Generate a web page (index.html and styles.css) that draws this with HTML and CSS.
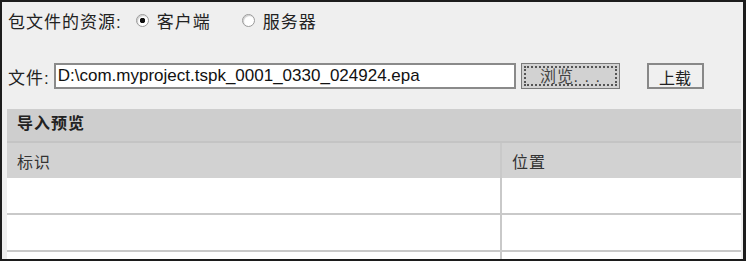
FILE: index.html
```html
<!DOCTYPE html>
<html lang="zh-CN">
<head>
    <meta charset="UTF-8">
    <title>导入</title>
    <link rel="stylesheet" href="styles.css">
</head>
<body>
    <div class="quadro">
        <div class="linha fonte">
            <span class="rotulo">包文件的资源:</span>
            <label class="opcao"><input type="radio" name="fonte" checked><span>客户端</span></label>
            <label class="opcao"><input type="radio" name="fonte"><span>服务器</span></label>
        </div>

        <div class="linha arquivo">
            <span class="rotulo">文件:</span>
            <input type="text" class="caminho" value="D:\com.myproject.tspk_0001_0330_024924.epa">
            <button class="procurar"><span>浏览. . .</span></button>
            <button class="enviar">上载</button>
        </div>

        <div class="previa">
            <div class="titulo">导入预览</div>
            <table>
                <thead><tr><th class="c1">标识</th><th>位置</th></tr></thead>
                <tbody>
                    <tr><td></td><td></td></tr>
                    <tr><td></td><td></td></tr>
                    <tr><td></td><td></td></tr>
                </tbody>
            </table>
        </div>
    </div>
</body>
</html>
```

FILE: styles.css
```css
body { margin: 0; font-family: "Liberation Sans", "Noto Sans CJK SC", sans-serif; color: #222; }
.quadro { box-sizing: border-box; width: 746px; height: 261px; border: 2px solid #1c1c1c; border-right-width: 3px; background-color: #efefef; overflow: hidden; }
.linha { display: flex; align-items: center; padding-left: 6px; font-size: 17px; }
.fonte { height: 37px; }
.arquivo { height: 26px; margin-top: 24px; }
.rotulo { letter-spacing: 1px; }
.opcao { display: flex; align-items: center; margin-left: 14px; letter-spacing: 1px; }
.opcao + .opcao { margin-left: 31px; }
.opcao input { appearance: none; width: 13px; height: 13px; margin: 0 8px 0 0; border: 1px solid #9a9a9a; border-radius: 50%; background: #fff; box-shadow: inset 1px 1px 1px #ccc; }
.opcao input:checked { background: radial-gradient(circle, #111 0 2.5px, #fff 3px); }
.caminho { box-sizing: border-box; width: 462px; height: 26px; margin-left: 4px; padding: 0 2px; border: 2px solid #8a8a8a; background: #fff; font-family: "Liberation Sans", sans-serif; font-size: 17px; color: #111; }
.procurar { box-sizing: border-box; width: 99px; height: 26px; margin-left: 5px; padding: 2px; border: 1px solid #7a7a7a; background: #d2d2d2; font-size: 16px; color: #444; }
.procurar span { display: block; height: 100%; box-sizing: border-box; border: 2px dotted #555; line-height: 18px; letter-spacing: 1px; }
.enviar { box-sizing: border-box; width: 57px; height: 26px; margin-left: 27px; border: 2px solid #888; background: #f0f0f0; font-size: 16px; color: #222; padding: 0; }
.previa { margin: 20px 2px 0 5px; }
.titulo { height: 32px; line-height: 30px; padding-left: 10px; background: #cecece; font-weight: bold; font-size: 16px; letter-spacing: 1px; border-bottom: 2px solid #c4c4c4; }
table { border-collapse: collapse; width: 100%; }
th, td { height: 35px; padding: 0; border-bottom: 2px solid #c9c9c9; }
th { background: #d2d2d2; text-align: left; font-weight: normal; font-size: 16px; letter-spacing: 1px; padding-left: 10px; height: 35px; border-bottom: none; color: #333; }
td { background: #fff; }
.c1, td:first-child { width: 483px; border-right: 2px solid #c9c9c9; }
```
